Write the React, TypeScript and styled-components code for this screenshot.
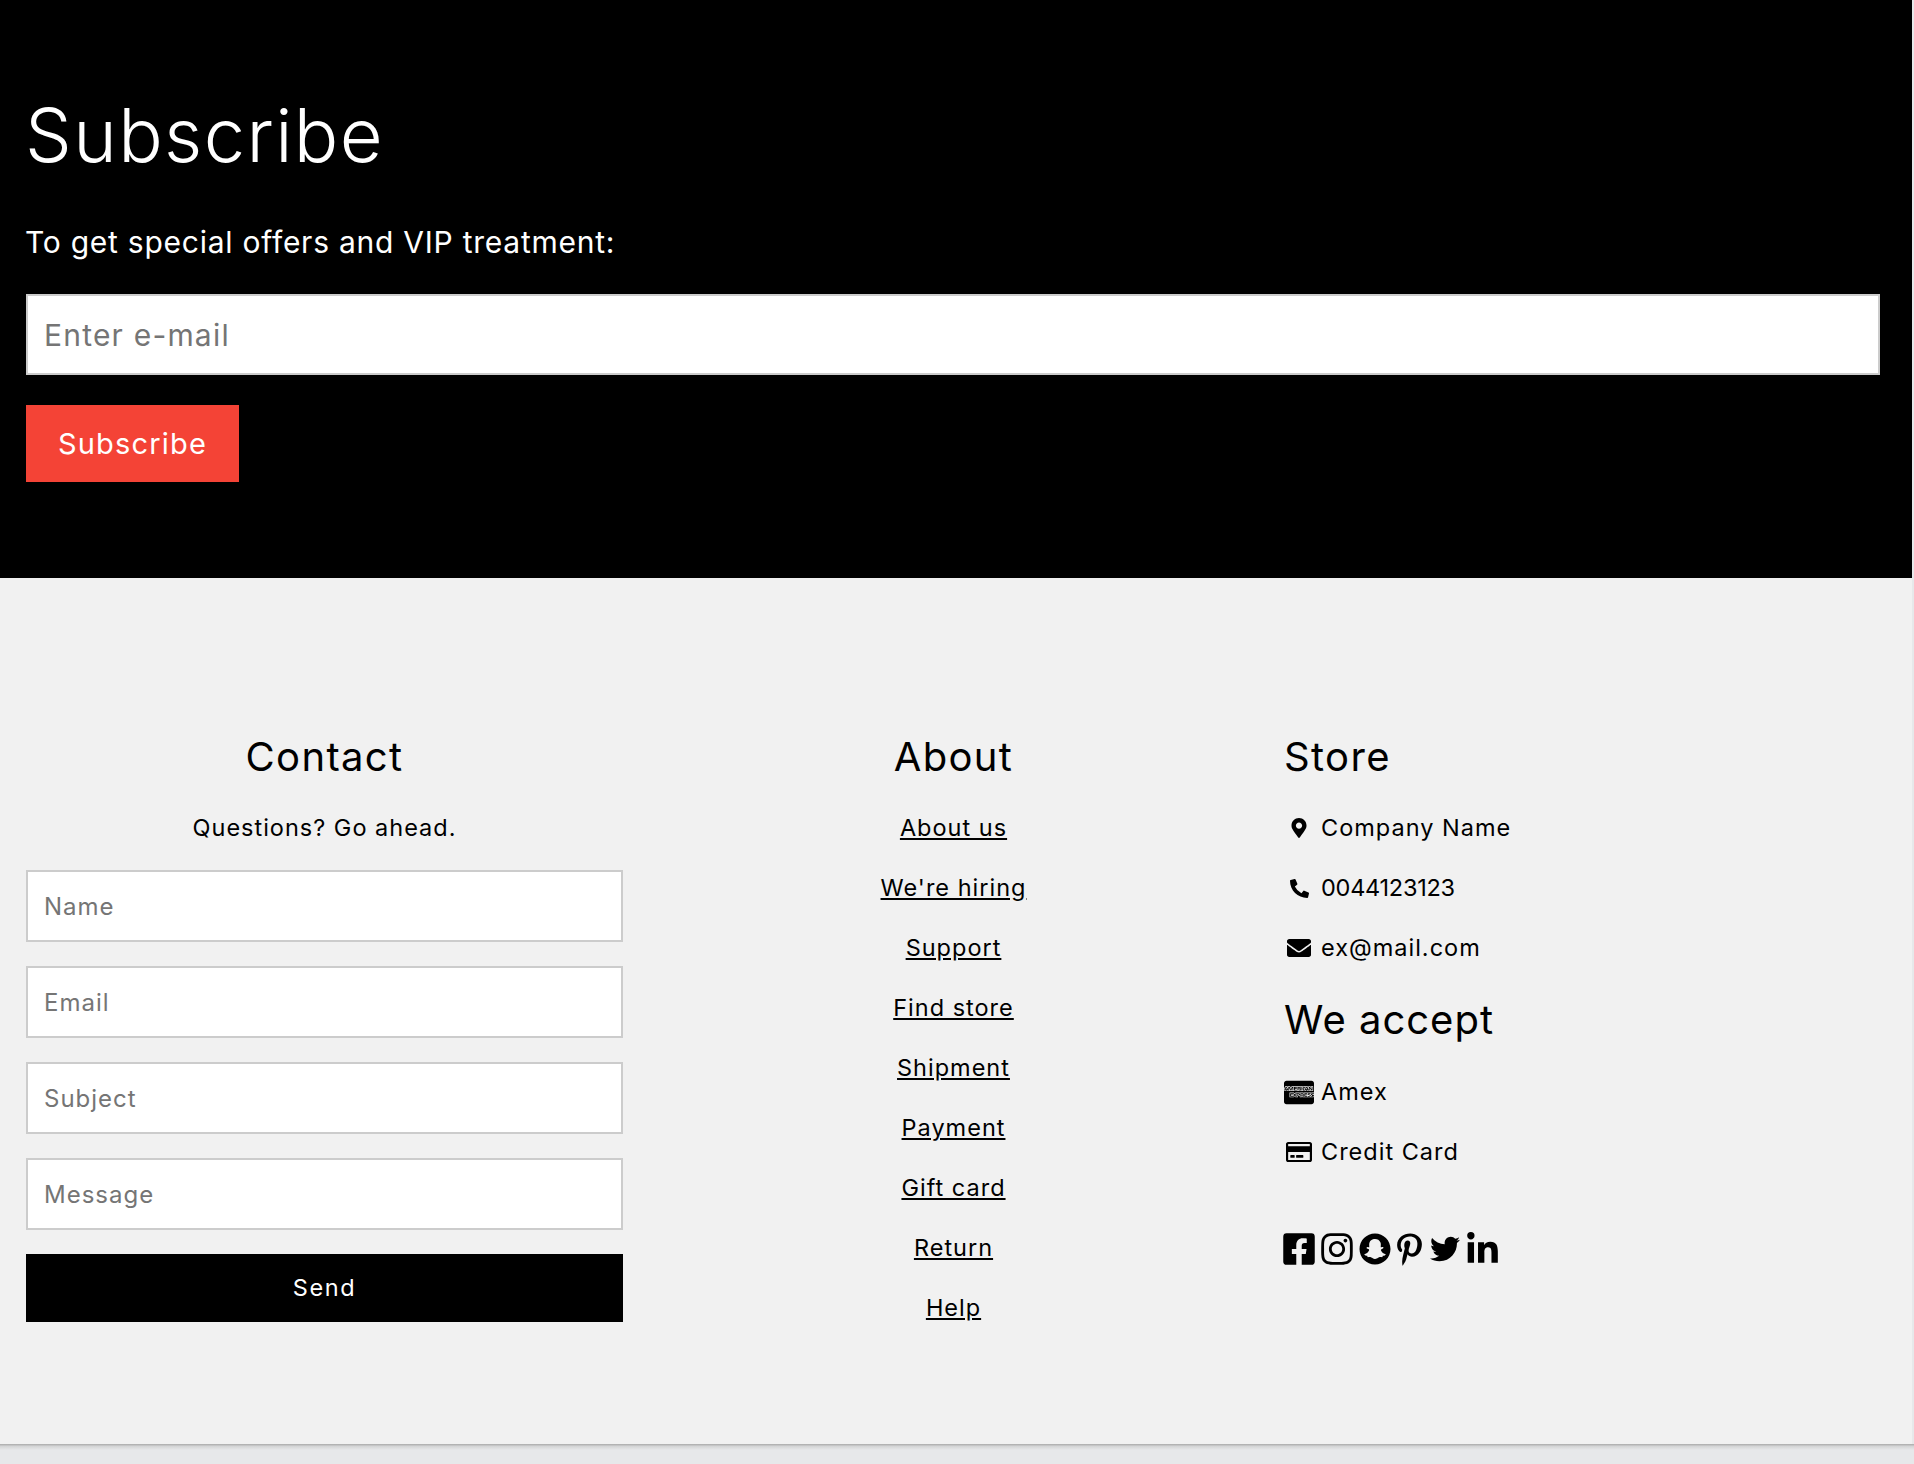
import { FC, ReactNode } from 'react';
import styled, { createGlobalStyle } from 'styled-components';
import {
  FaMapMarkerAlt,
  FaPhoneAlt,
  FaEnvelope,
  FaCcAmex,
  FaRegCreditCard,
  FaFacebookSquare,
  FaInstagram,
  FaSnapchat,
  FaPinterestP,
  FaTwitter,
  FaLinkedinIn,
} from 'react-icons/fa';

const GlobalStyle = createGlobalStyle`
  html, body {
    margin: 0;
    background: #e7e8ea;
  }
  * {
    box-sizing: border-box;
  }
  body {
    font-family: Inter, "Open Sans", "Liberation Sans", sans-serif;
    font-size: 23.5px;
    letter-spacing: 1px;
    line-height: 36px;
    color: #000;
  }
`;

const links = ['About us', "We're hiring", 'Support', 'Find store', 'Shipment', 'Payment', 'Gift card', 'Return', 'Help'];
const fields = ['Name', 'Email', 'Subject', 'Message'];

const socials = [
  { icon: <FaFacebookSquare size={36} />, width: 31.5 },
  { icon: <FaInstagram size={36} />, width: 31.5 },
  { icon: <FaSnapchat size={32} />, width: 31 },
  { icon: <FaPinterestP size={33} />, width: 26 },
  { icon: <FaTwitter size={30} />, width: 31 },
  { icon: <FaLinkedinIn size={35} />, width: 31 },
];

const ContactRow: FC<{ icon: ReactNode; tight?: boolean; children: ReactNode }> = ({ icon, tight, children }) => (
  <SRow $tight={tight}>
    <SRowIcon>{icon}</SRowIcon>
    {children}
  </SRow>
);

export default function App() {
  return (
    <>
      <GlobalStyle />
      <SPage>
        <SSubscribe>
          <SHero>Subscribe</SHero>
          <SLead>To get special offers and VIP treatment:</SLead>
          <SEmailInput placeholder="Enter e-mail" />
          <SRedButton>Subscribe</SRedButton>
        </SSubscribe>
        <SFooter>
          <SContact>
            <SHeading>Contact</SHeading>
            <SQuestion>Questions? Go ahead.</SQuestion>
            <SForm>
              {fields.map((f) => (
                <SField key={f} placeholder={f} />
              ))}
              <SSend>Send</SSend>
            </SForm>
          </SContact>
          <SAbout>
            <SHeading>About</SHeading>
            {links.map((l) => (
              <SLink key={l} href="#">
                {l}
              </SLink>
            ))}
          </SAbout>
          <SStore>
            <SHeading>Store</SHeading>
            <ContactRow icon={<FaMapMarkerAlt size={20} />}>Company Name</ContactRow>
            <ContactRow icon={<FaPhoneAlt size={19} />} tight>
              0044123123
            </ContactRow>
            <ContactRow icon={<FaEnvelope size={24} />}>ex@mail.com</ContactRow>
            <SAccept>We accept</SAccept>
            <ContactRow icon={<FaCcAmex size={31} />}>Amex</ContactRow>
            <ContactRow icon={<FaRegCreditCard size={26} />}>Credit Card</ContactRow>
            <SSocial>
              {socials.map((s, i) => (
                <SGlyph key={i} $width={s.width}>
                  {s.icon}
                </SGlyph>
              ))}
            </SSocial>
          </SStore>
        </SFooter>
      </SPage>
      <SPageEdge />
    </>
  );
}

const SPage = styled.div`
  width: 1912px;
  height: 1444px;
  background: #f1f1f1;
`;

const SPageEdge = styled.div`
  height: 6px;
  background: linear-gradient(#a9a9a9, #d4d5d6 40%, #e7e8ea);
`;

const SSubscribe = styled.section`
  height: 578px;
  padding: 90px 32px 0 26px;
  background: #000;
  color: #fff;
`;

const SHero = styled.h1`
  margin: 0 0 0 -1px;
  font-size: 74px;
  font-weight: 300;
  line-height: 90px;
  letter-spacing: 1.4px;
`;

const SLead = styled.p`
  margin: 42px 0 32px -1px;
  font-size: 30px;
  font-weight: 400;
  line-height: 40px;
  letter-spacing: 0.75px;
`;

const SEmailInput = styled.input`
  display: block;
  width: 100%;
  height: 81px;
  padding: 0 16px;
  border: 2px solid #ccc;
  background: #fff;
  font: inherit;
  font-size: 30px;
  letter-spacing: 1.2px;
  outline: none;
  &::placeholder {
    color: #757575;
  }
`;

const SRedButton = styled.button`
  display: block;
  width: 213px;
  height: 77px;
  margin-top: 30px;
  border: 0;
  background: #f44336;
  color: #fff;
  font: inherit;
  font-size: 29px;
  letter-spacing: 1.2px;
`;

const SFooter = styled.footer`
  display: grid;
  grid-template-columns: 649px 609px 1fr;
  padding-top: 154px;
`;

const SContact = styled.div`
  padding: 0 26px;
  text-align: center;
`;

const SHeading = styled.h3`
  margin: 0 0 28px;
  font-size: 40px;
  font-weight: 400;
  line-height: 50px;
  letter-spacing: 1.35px;
`;

const SQuestion = styled.p`
  margin: 0 0 24px;
`;

const SForm = styled.form`
  display: flex;
  flex-direction: column;
  gap: 24px;
`;

const SField = styled.input`
  width: 100%;
  height: 72px;
  padding: 0 16px;
  border: 2px solid #ccc;
  background: #fff;
  font: inherit;
  font-size: 24px;
  letter-spacing: 1px;
  outline: none;
  &::placeholder {
    color: #757575;
  }
`;

const SSend = styled.button`
  height: 68px;
  border: 0;
  background: #000;
  color: #fff;
  font: inherit;
  letter-spacing: 1.6px;
`;

const SAbout = styled.div`
  text-align: center;
`;

const SLink = styled.a`
  display: block;
  margin-bottom: 24px;
  color: #000;
  text-decoration: underline;
`;

const SStore = styled.div`
  padding-left: 26px;
`;

const SRow = styled.div<{ $tight?: boolean }>`
  display: flex;
  align-items: center;
  height: 36px;
  margin-bottom: 24px;
  letter-spacing: ${(p) => (p.$tight ? '-0.25px' : 'inherit')};
`;

const SRowIcon = styled.span`
  display: flex;
  justify-content: center;
  align-items: center;
  width: 30px;
  margin-right: 7px;
  flex-shrink: 0;
`;

const SAccept = styled.h3`
  margin: 29px 0 29px;
  font-size: 40px;
  font-weight: 400;
  line-height: 50px;
  letter-spacing: 1px;
`;

const SSocial = styled.div`
  display: flex;
  align-items: center;
  gap: 6.5px;
  margin-top: 61px;
  margin-left: -1px;
`;

const SGlyph = styled.span<{ $width: number }>`
  display: flex;
  justify-content: center;
  flex-shrink: 0;
  width: ${(p) => p.$width}px;
  svg {
    flex-shrink: 0;
  }
`;
